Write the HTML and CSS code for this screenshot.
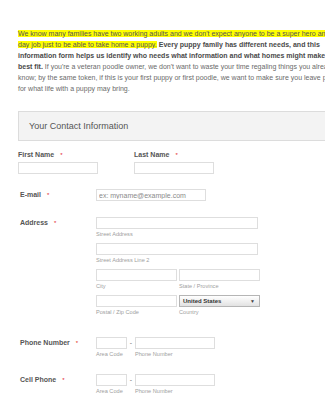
FILE: index.html
```html
<!DOCTYPE html>
<html lang="en">
  <head>
    <meta charset="UTF-8" />
    <meta name="viewport" content="width=device-width, initial-scale=1.0" />
    <title>Puppy Application</title>
    <link rel="stylesheet" href="styles.css">
  </head>
  <body>
    <div class="page">
      <p class="intro"><span class="hl">We know many families have two working adults and we don't expect anyone to be a super hero and quit day job just to be able to take home a puppy.</span> <strong>Every puppy family has different needs, and this information form helps us identify who needs what information and what homes might make the best fit.</strong> If you're a veteran poodle owner, we don't want to waste your time regaling things you already know; by the same token, if this is your first puppy or first poodle, we want to make sure you leave poised for what life with a puppy may bring.</p>

      <div class="section-head">Your Contact Information</div>

      <div class="name-row">
        <div class="name-field">
          <label class="lbl">First Name<span class="req">*</span></label>
          <input type="text" class="box w-name" />
        </div>
        <div class="name-field">
          <label class="lbl">Last Name<span class="req">*</span></label>
          <input type="text" class="box w-name" />
        </div>
      </div>

      <div class="row row-email">
        <label class="lbl row-lbl">E-mail<span class="req">*</span></label>
        <div class="row-body">
          <input type="text" class="box w-email" placeholder="ex: myname@example.com" />
        </div>
      </div>

      <div class="row row-address">
        <label class="lbl row-lbl">Address<span class="req">*</span></label>
        <div class="row-body">
          <div class="sub-field">
            <input type="text" class="box w-street" />
            <span class="sub">Street Address</span>
          </div>
          <div class="sub-field">
            <input type="text" class="box w-street" />
            <span class="sub">Street Address Line 2</span>
          </div>
          <div class="pair">
            <div class="sub-field">
              <input type="text" class="box w-half" />
              <span class="sub">City</span>
            </div>
            <div class="sub-field">
              <input type="text" class="box w-half" />
              <span class="sub">State / Province</span>
            </div>
          </div>
          <div class="pair">
            <div class="sub-field">
              <input type="text" class="box w-half" />
              <span class="sub">Postal / Zip Code</span>
            </div>
            <div class="sub-field">
              <div class="select w-half">United States<span class="arrow">&#9660;</span></div>
              <span class="sub">Country</span>
            </div>
          </div>
        </div>
      </div>

      <div class="row">
        <label class="lbl row-lbl">Phone Number<span class="req">*</span></label>
        <div class="row-body phone">
          <div class="sub-field">
            <input type="text" class="box w-area" />
            <span class="sub">Area Code</span>
          </div>
          <span class="dash">-</span>
          <div class="sub-field">
            <input type="text" class="box w-name" />
            <span class="sub">Phone Number</span>
          </div>
        </div>
      </div>

      <div class="row">
        <label class="lbl row-lbl">Cell Phone<span class="req">*</span></label>
        <div class="row-body phone">
          <div class="sub-field">
            <input type="text" class="box w-area" />
            <span class="sub">Area Code</span>
          </div>
          <span class="dash">-</span>
          <div class="sub-field">
            <input type="text" class="box w-name" />
            <span class="sub">Phone Number</span>
          </div>
        </div>
      </div>
    </div>
  </body>
</html>
```

FILE: styles.css
```css
html,
body {
  margin: 0;
  padding: 0;
  overflow: hidden;
  background-color: #ffffff;
  font-family: "Liberation Sans", Arial, sans-serif;
  color: #555;
}
.page {
  padding: 28px 0 0 18px;
  width: 360px;
}
.intro {
  width: 327px;
  margin: 0;
  font-size: 7px;
  line-height: 11px;
  color: #6a6a6a;
}
.intro .hl {
  background-color: #ffff00;
  color: #555;
}
.intro strong {
  color: #4a4a4a;
}
.section-head {
  margin-top: 17px;
  width: 340px;
  height: 30px;
  box-sizing: border-box;
  border: 1px solid #dcdcdc;
  background-color: #f3f3f3;
  padding-left: 10px;
  font-size: 9px;
  line-height: 28px;
  color: #555;
}
.lbl {
  font-size: 7px;
  font-weight: bold;
  color: #555;
  line-height: 12px;
}
.req {
  color: #e21b1b;
  font-size: 6px;
  margin-left: 6px;
  font-weight: normal;
}
.name-row {
  display: flex;
  margin-top: 8px;
}
.name-field {
  width: 116px;
  display: flex;
  flex-direction: column;
}
.name-field .lbl {
  margin-bottom: 1px;
}
.box {
  display: block;
  box-sizing: border-box;
  height: 12px;
  margin: 0;
  padding: 0 2px;
  border: 1px solid #dedede;
  background-color: #ffffff;
  font-family: "Liberation Sans", Arial, sans-serif;
  font-size: 7px;
  color: #555;
  outline: none;
}
.box::placeholder {
  color: #8a8a8a;
}
.w-name {
  width: 80px;
}
.w-email {
  width: 110px;
}
.w-street {
  width: 162px;
}
.w-half {
  width: 81px;
}
.w-area {
  width: 31px;
}
.row {
  display: flex;
  padding-left: 2px;
  margin-top: 16px;
}
.row-email {
  margin-top: 15px;
}
.row-address {
  margin-bottom: 21px;
}
.row-lbl {
  width: 76px;
  flex: none;
}
.row-body {
  display: flex;
  flex-direction: column;
}
.sub-field {
  display: flex;
  flex-direction: column;
  margin-bottom: 5px;
}
.row-body .sub-field:last-child,
.phone .sub-field,
.pair .sub-field {
  margin-bottom: 0;
}
.pair {
  display: flex;
  gap: 2px;
  margin-bottom: 5px;
}
.row-body .pair:last-child {
  margin-bottom: 0;
}
.sub {
  margin-top: 1px;
  font-size: 5.6px;
  line-height: 8px;
  color: #a0a0a0;
}
.select {
  position: relative;
  box-sizing: border-box;
  height: 12px;
  border: 1px solid #b5b5b5;
  background: linear-gradient(#ffffff, #e2e2e2);
  padding-left: 3px;
  font-size: 6px;
  font-weight: bold;
  line-height: 10px;
  color: #333;
}
.arrow {
  position: absolute;
  right: 4px;
  top: 0;
  font-size: 5px;
  color: #444;
}
.phone {
  flex-direction: row;
  align-items: flex-start;
}
.dash {
  width: 8px;
  text-align: center;
  font-size: 7px;
  line-height: 12px;
  color: #777;
}
```
